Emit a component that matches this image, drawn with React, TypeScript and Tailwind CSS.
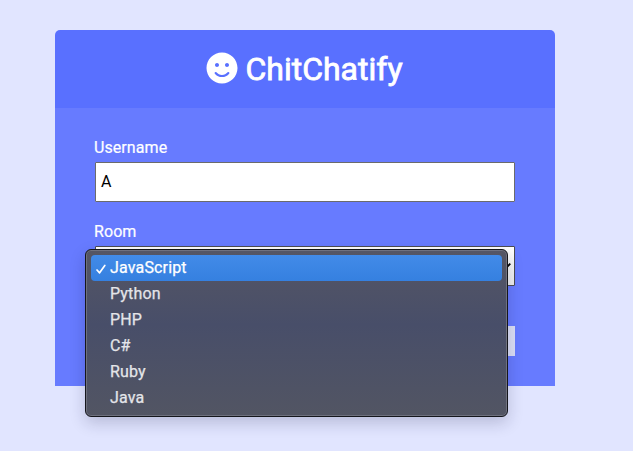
import { FaSmile } from 'react-icons/fa';

const rooms = ['JavaScript', 'Python', 'PHP', 'C#', 'Ruby', 'Java'];

function RoomMenu() {
  return (
    <ul className="absolute -left-[10px] top-[3px] h-[168px] w-[423px] rounded-[6px] border border-[#15161c] bg-linear-to-b from-[#555664] via-[#484e69] via-45% to-[#525563] px-[5px] py-[5px] text-[#e4e5e9] shadow-[inset_0_0_0_1px_#6f717e,0_6px_16px_rgba(20,20,60,0.2)] [-webkit-text-stroke:0.25px_currentColor]">
      {rooms.map((room, i) => (
        <li
          key={room}
          className={
            i === 0
              ? 'flex h-[26px] items-center rounded-[4px] bg-linear-to-b from-[#428be8] to-[#3580e0] text-white'
              : 'flex h-[26px] items-center'
          }
        >
          <span className="flex w-[19px] justify-center pt-px">
            {i === 0 && (
              <svg width="10" height="10" viewBox="0 0 10 10" fill="none" stroke="white" strokeWidth="1.7" strokeLinecap="round" strokeLinejoin="round">
                <path d="M1 6 3.6 8.8 8.8 1.4" />
              </svg>
            )}
          </span>
          <span className="leading-[26px] tracking-[0.01em]">{room}</span>
        </li>
      ))}
    </ul>
  );
}

export default function App() {
  return (
    <div className="h-[451px] w-[633px] overflow-hidden bg-[#e1e5ff] pl-[55px] pt-[30px] font-['Roboto',sans-serif] text-base">
      <div className="w-[500px]">
        <header className="flex h-[78px] items-center justify-center gap-[7px] rounded-t-[5px] bg-[#5970ff] pr-px text-white">
          <FaSmile className="relative -top-px size-8" />
          <h1 className="text-[32px] font-normal leading-[38px] [-webkit-text-stroke:0.8px_white]">ChitChatify</h1>
        </header>
        <main className="h-[278px] bg-[#677bff] px-10 pt-[30px]">
          <label className="-ml-px mb-[5px] block leading-[19px] tracking-[0.005em] text-white [-webkit-text-stroke:0.2px_white]">Username</label>
          <div className="flex h-10 items-center rounded-[1px] border border-[#6b6b6b] bg-white px-[5px] text-black">A</div>
          <label className="-ml-px mb-[5px] mt-5 block leading-[19px] tracking-[0.005em] text-white [-webkit-text-stroke:0.2px_white]">Room</label>
          <div className="relative h-10">
            <div className="flex h-10 items-center justify-end rounded-[1px] border border-[#4c4c50] bg-linear-to-b from-white to-[#ececec] pr-[3px]">
              <svg width="9" height="6" viewBox="0 0 9 6" fill="none" stroke="black" strokeWidth="1.8">
                <path d="m.7.7 3.8 3.8L8.3.7" />
              </svg>
            </div>
            <RoomMenu />
          </div>
          <div className="mt-10 h-[30px] bg-[#dcdff6]" />
        </main>
      </div>
    </div>
  );
}
